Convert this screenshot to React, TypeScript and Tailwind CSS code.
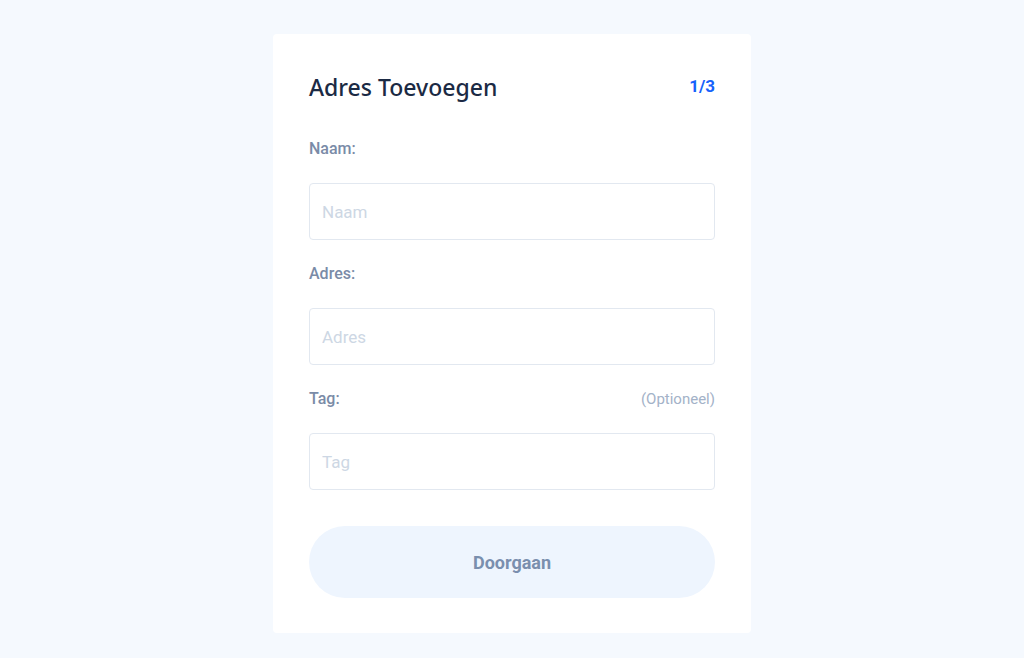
import * as React from 'react';

const fields = [
  { label: 'Naam:', placeholder: 'Naam', optional: false },
  { label: 'Adres:', placeholder: 'Adres', optional: false },
  { label: 'Tag:', placeholder: 'Tag', optional: true },
];

export default function App() {
  return (
    <div className="min-h-[658px] w-full bg-[#f5f9fe] pt-[34px] font-['Roboto',sans-serif]">
      <div className="mx-auto w-[478px] rounded-[4px] bg-white px-9 pt-[37px] pb-[35px]">
        <div className="flex h-8 items-center justify-between">
          <h1 className="font-['Noto_Sans',sans-serif] text-[23px] font-medium text-[#1b2a44]">
            Adres Toevoegen
          </h1>
          <span className="text-[17px] font-bold text-[#1662fb]">1/3</span>
        </div>

        <div className="mt-9 flex flex-col">
          {fields.map((field) => (
            <div key={field.label} className="mb-6 flex flex-col gap-6">
              <div className="flex h-5 items-center justify-between">
                <label className="text-base font-medium text-[#7a8ba7]">{field.label}</label>
                {field.optional && (
                  <span className="text-[15px] text-[#a3b2c8]">(Optioneel)</span>
                )}
              </div>
              <input
                placeholder={field.placeholder}
                className="h-[57px] w-full rounded-[4px] border border-[#e2e8f0] px-3 text-[17px] text-[#1b2a44] outline-none placeholder:text-[#cdd7e4]"
              />
            </div>
          ))}
        </div>

        <button className="mt-3 h-[72px] w-full rounded-full bg-[#eef5fe] text-[18px] font-bold text-[#7a8fae]">
          Doorgaan
        </button>
      </div>
    </div>
  );
}
